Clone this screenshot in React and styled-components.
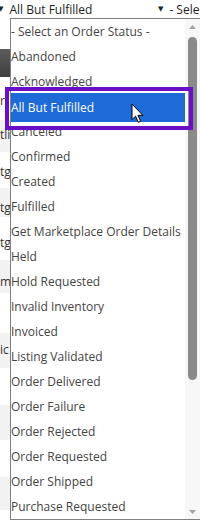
import React from "react"
import styled, { createGlobalStyle } from "styled-components"

const statuses = [
  "- Select an Order Status -",
  "Abandoned",
  "Acknowledged",
  "All But Fulfilled",
  "Canceled",
  "Confirmed",
  "Created",
  "Fulfilled",
  "Get Marketplace Order Details",
  "Held",
  "Hold Requested",
  "Invalid Inventory",
  "Invoiced",
  "Listing Validated",
  "Order Delivered",
  "Order Failure",
  "Order Rejected",
  "Order Requested",
  "Order Shipped",
  "Purchase Requested",
]

// rows of the grid sitting behind the open list (only a sliver shows)
const rows = [
  { h: 43, alt: false, text: "r", top: 16 },
  { h: 32, alt: true, text: "tli", top: 7 },
  { h: 36, alt: false, text: "tg", top: 12 },
  { h: 29, alt: true, text: "tg", top: 12 },
  { h: 43, alt: false, text: "tg", top: 18 },
  { h: 33, alt: true, text: "m", top: 14 },
  { h: 40, alt: false, text: "", top: 0 },
  { h: 35, alt: true, text: "ic", top: 9 },
  { h: 37, alt: false, text: "", top: 0 },
  { h: 35, alt: true, text: "", top: 0 },
  { h: 37, alt: false, text: "", top: 0 },
  { h: 33, alt: true, text: "", top: 0 },
  { h: 10, alt: false, text: "", top: 0 },
]

const GlobalStyle = createGlobalStyle`
  html, body {
    margin: 0;
    padding: 0;
    background: #fff;
    overflow: hidden;
  }
  body {
    font-family: "Open Sans", "DejaVu Sans", sans-serif;
  }
`

export default function App() {
  return (
    <>
      <GlobalStyle />
      <Page>
        <Toolbar>
          <Select offset={-2} width={160}>
            <Caret>▼</Caret>
            <SelectValue>All But Fulfilled</SelectValue>
          </Select>
          <Select>
            <Caret>▼</Caret>
            <SelectValue>- Select an Order Status -</SelectValue>
          </Select>
        </Toolbar>
        <Grid>
          <GridHeader />
          {rows.map((r, i) => (
            <GridRow key={i} h={r.h} alt={r.alt} top={r.top}>
              {r.text}
            </GridRow>
          ))}
        </Grid>

        <Dropdown>
          <List>
            {statuses.map((s, i) =>
              i === 3 ? (
                <Selected key={s}>{s}</Selected>
              ) : (
                <Option key={s}>{s}</Option>
              )
            )}
          </List>
          <Scrollbar>
            <ScrollButton>
              <svg width="7" height="4" viewBox="0 0 7 4">
                <path d="M0 4 L3.5 0 L7 4 Z" fill="#a3a3a3" />
              </svg>
            </ScrollButton>
            <Thumb />
            <Track />
            <ScrollButton>
              <svg width="7" height="4" viewBox="0 0 7 4">
                <path d="M0 0 L7 0 L3.5 4 Z" fill="#a3a3a3" />
              </svg>
            </ScrollButton>
          </Scrollbar>
        </Dropdown>

        <FocusRing />
        <Pointer width="13" height="21" viewBox="0 0 13 21">
          <path
            d="M1 1 L1 16.5 L4.6 13.2 L7.3 19.3 L9.6 18.3 L7 12.3 L11.8 12.3 Z"
            fill="#fff"
            stroke="#000"
            strokeWidth="1"
            strokeLinejoin="miter"
          />
        </Pointer>
      </Page>
    </>
  )
}

const Page = styled.div`
  position: relative;
  width: 200px;
  height: 520px;
  overflow: hidden;
  background: #fff;
`
const Toolbar = styled.div`
  display: flex;
  align-items: center;
  height: 18px;
  white-space: nowrap;
`
const Select = styled.div`
  display: flex;
  align-items: center;
  flex: none;
  margin-left: ${p => p.offset || 0}px;
  width: ${p => (p.width ? `${p.width}px` : "auto")};
`
const Caret = styled.span`
  font-family: "DejaVu Sans", sans-serif;
  font-size: 7px;
  color: #222;
  margin-right: 6px;
`
const SelectValue = styled.span`
  font-size: 12px;
  color: #1e1e1e;
`
const Grid = styled.div`
  margin-top: 31px;
  display: flex;
  flex-direction: column;
`
const GridHeader = styled.div`
  height: 28px;
  background: linear-gradient(#5c5c5c, #3f3f3f);
`
const GridRow = styled.div`
  height: ${p => p.h}px;
  box-sizing: border-box;
  padding-top: ${p => p.top}px;
  background: ${p => (p.alt ? "#f2f2f2" : "#fff")};
  font-size: 12px;
  line-height: 16px;
  color: #333;
  white-space: nowrap;
`
const Dropdown = styled.div`
  position: absolute;
  top: 18px;
  left: 10px;
  width: 192px;
  height: 502px;
  box-sizing: border-box;
  border: 1px solid #808080;
  background: #fff;
  display: flex;
`
const List = styled.div`
  width: 174px;
  display: flex;
  flex-direction: column;
`
const Option = styled.div`
  height: 25px;
  flex: none;
  display: flex;
  align-items: center;
  font-size: 12px;
  color: #444;
  white-space: nowrap;
`
const Selected = styled(Option)`
  height: 29px;
  margin: -1px 0 -3px;
  background: #1d6bd6;
  color: #fff;
`
const Scrollbar = styled.div`
  width: 15px;
  background: #f7f7f7;
  display: flex;
  flex-direction: column;
  align-items: center;
`
const ScrollButton = styled.div`
  height: 15px;
  flex: none;
  display: flex;
  align-items: center;
  justify-content: center;
`
const Thumb = styled.div`
  width: 9px;
  height: 343px;
  margin-top: 3px;
  flex: none;
  border-radius: 5px;
  background: #8a8a8a;
`
const Track = styled.div`
  flex: 1;
`
const FocusRing = styled.div`
  position: absolute;
  left: 5px;
  top: 87px;
  width: 188px;
  height: 43px;
  box-sizing: border-box;
  border: 4px solid #6a0fc8;
`
const Pointer = styled.svg`
  position: absolute;
  left: 131px;
  top: 103px;
`
